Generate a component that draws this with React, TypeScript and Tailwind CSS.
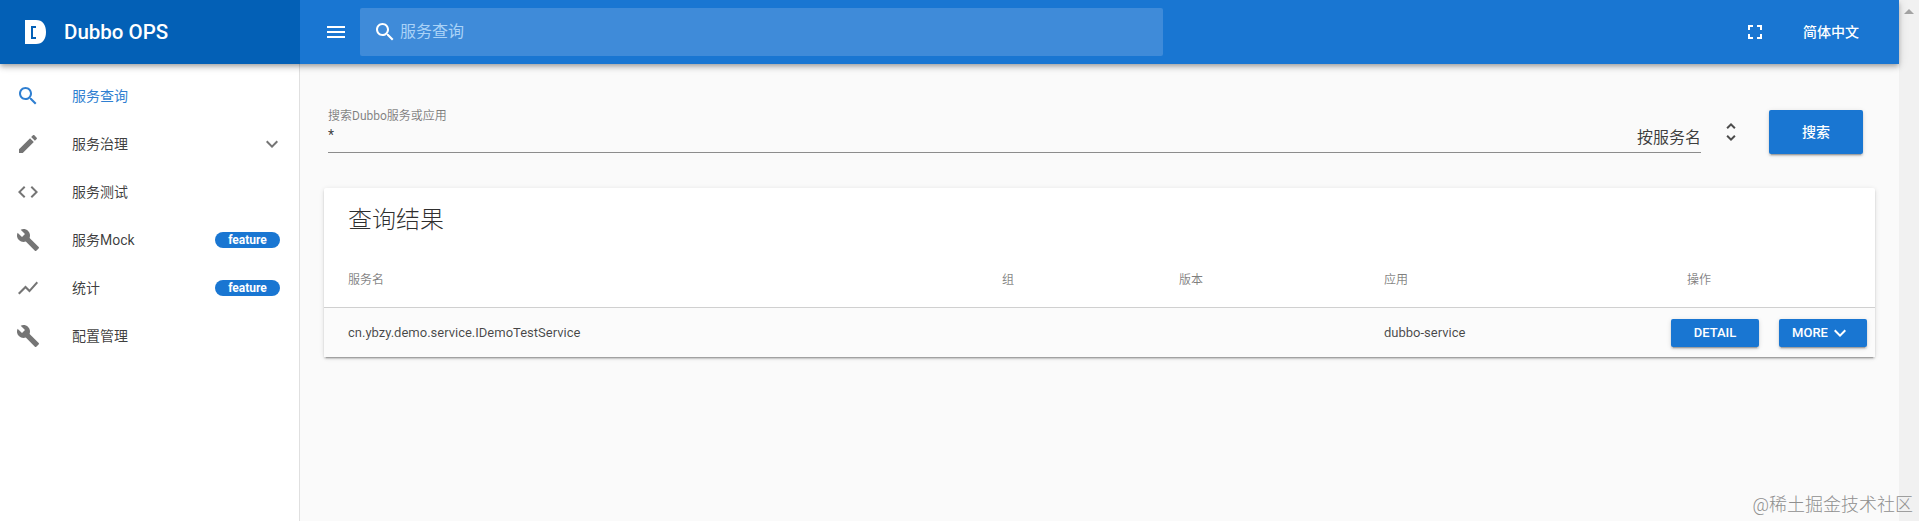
import type { ReactNode } from 'react';

const fontStack = "font-['Roboto','Noto_Sans_CJK_SC',sans-serif]";

function MdIcon({ d, className }: { d: string; className?: string }) {
  return (
    <svg viewBox="0 0 24 24" fill="currentColor" className={className}>
      <path d={d} />
    </svg>
  );
}

const icons = {
  search:
    'M15.5 14h-.79l-.28-.27C15.41 12.59 16 11.11 16 9.5 16 5.91 13.09 3 9.5 3S3 5.91 3 9.5 5.91 16 9.5 16c1.61 0 3.09-.59 4.23-1.57l.27.28v.79l5 4.99L20.49 19l-4.99-5zm-6 0C7.01 14 5 11.99 5 9.5S7.01 5 9.5 5 14 7.01 14 9.5 11.99 14 9.5 14z',
  edit: 'M3 17.25V21h3.75L17.81 9.94l-3.75-3.75L3 17.25zM20.71 7.04c.39-.39.39-1.02 0-1.41l-2.34-2.34c-.39-.39-1.02-.39-1.41 0l-1.83 1.83 3.75 3.75 1.83-1.83z',
  code: 'M9.4 16.6L4.8 12l4.6-4.6L8 6l-6 6 6 6 1.4-1.4zm5.2 0l4.6-4.6-4.6-4.6L16 6l6 6-6 6-1.4-1.4z',
  build:
    'M22.7 19l-9.1-9.1c.9-2.3.4-5-1.5-6.9-2-2-5-2.4-7.4-1.3L9 6 6 9 1.6 4.7C.4 7.1.9 10.1 2.9 12.1c1.9 1.9 4.6 2.4 6.9 1.5l9.1 9.1c.4.4 1 .4 1.4 0l2.3-2.3c.5-.4.5-1.1.1-1.4z',
  chart: 'M3.5 18.49l6-6.01 4 4L22 6.92l-1.41-1.41-7.09 7.97-4-4L2 16.99z',
  menu: 'M3 18h18v-2H3v2zm0-5h18v-2H3v2zm0-7v2h18V6H3z',
  fullscreen: 'M7 14H5v5h5v-2H7v-3zm-2-4h2V7h3V5H5v5zm12 7h-3v2h5v-5h-2v3zM14 5v2h3v3h2V5h-5z',
  unfold: 'M12 5.83L15.17 9l1.41-1.41L12 3 7.41 7.59 8.83 9 12 5.83zm0 12.34L8.83 15l-1.41 1.41L12 21l4.59-4.59L15.17 15 12 18.17z',
  down: 'M7.41 8.59L12 13.17l4.59-4.58L18 10l-6 6-6-6 1.41-1.41z',
};

const navItems = [
  { icon: icons.search, label: '服务查询', active: true },
  { icon: icons.edit, label: '服务治理', arrow: true },
  { icon: icons.code, label: '服务测试' },
  { icon: icons.build, label: '服务Mock', chip: true },
  { icon: icons.chart, label: '统计', chip: true },
  { icon: icons.build, label: '配置管理' },
];

const rowGrid = 'grid grid-cols-[654px_177px_205px_287px_1fr] pl-6';

function BlueButton({ children, className }: { children: ReactNode; className?: string }) {
  return (
    <button
      className={`flex items-center justify-center rounded-[2px] bg-[#1976d2] text-white font-medium shadow-[0_3px_1px_-2px_rgba(0,0,0,.2),0_2px_2px_0_rgba(0,0,0,.14),0_1px_5px_0_rgba(0,0,0,.12)] ${className}`}
    >
      {children}
    </button>
  );
}

export default function App() {
  return (
    <div className={`relative flex h-[521px] overflow-hidden bg-[#fafafa] text-[14px] text-[#000000c4] ${fontStack}`}>
      <div className="flex min-w-0 flex-1 flex-col">
        <header className="z-10 flex h-16 shrink-0 bg-[#1976d2] text-white shadow-[0_2px_4px_-1px_rgba(0,0,0,.2),0_4px_5px_0_rgba(0,0,0,.14),0_1px_10px_0_rgba(0,0,0,.12)]">
          <div className="flex w-[300px] items-center bg-[#0360b6] pl-[25px]">
            <svg viewBox="0 0 21 24" className="h-6 w-[21px]">
              <path
                fillRule="evenodd"
                fill="#ffffff"
                d="M0 0h11c6.500 0 10 4.500 10 12s-3.500 12-10 12H0zM6 6v13h5v-2H8V8h3V6z"
              />
            </svg>
            <span className="ml-[18px] text-[20.5px] font-medium">Dubbo OPS</span>
          </div>
          <button className="ml-6 flex w-6 items-center justify-center self-center">
            <MdIcon d={icons.menu} className="h-6 w-6" />
          </button>
          <div className="ml-3 mt-2 flex h-12 w-[803px] items-center rounded-[2px] bg-[#3f8bd9] pl-[13px]">
            <MdIcon d={icons.search} className="h-6 w-6" />
            <span className="ml-[3px] text-[16px] text-[#a9d2f7]">服务查询</span>
          </div>
          <div className="ml-auto flex items-center pr-10">
            <MdIcon d={icons.fullscreen} className="h-6 w-6" />
            <span className="ml-9 font-medium">简体中文</span>
          </div>
        </header>

        <div className="flex min-h-0 flex-1">
          <aside className="w-[300px] shrink-0 border-r border-[#e0e0e0] bg-white pt-2">
            {navItems.map((item) => (
              <div key={item.label} className={`flex h-12 items-center pl-4 pr-[19px] ${item.active ? 'text-[#2f7fd1]' : ''}`}>
                <MdIcon d={item.icon} className={`h-6 w-6 shrink-0 ${item.active ? '' : 'text-[#757575]'}`} />
                <span className="ml-8">{item.label}</span>
                {item.arrow && <MdIcon d={icons.down} className="ml-auto mr-[-4px] h-6 w-6 text-[#757575]" />}
                {item.chip && (
                  <span className="ml-auto flex h-4 w-[65px] items-center justify-center rounded-full bg-[#1976d2] text-[12px] font-bold text-white">
                    feature
                  </span>
                )}
              </div>
            ))}
          </aside>

          <main className="min-w-0 flex-1 px-6 pt-[44px]">
            <div className="flex items-start pl-1">
              <div className="flex-1">
                <div className="h-[45px] border-b border-[#8c8c8c]">
                  <div className="text-[12px] leading-4 text-[#00000080]">搜索Dubbo服务或应用</div>
                  <div className="flex justify-between text-[16px] leading-5">
                    <span className="pt-[1px] text-[14px]">*</span>
                    <span className="pt-[4px]">按服务名</span>
                  </div>
                </div>
              </div>
              <MdIcon d={icons.unfold} className="ml-[18px] mt-[12px] h-6 w-6 text-[#000000b3]" />
              <BlueButton className="ml-[26px] mt-[2px] h-[44px] w-[94px]">搜索</BlueButton>
              <div className="w-3" />
            </div>

            <section className="mt-[34px] rounded-[2px] bg-white shadow-[0_3px_1px_-2px_rgba(0,0,0,.2),0_2px_2px_0_rgba(0,0,0,.14),0_1px_5px_0_rgba(0,0,0,.12)]">
              <h2 className="h-[70px] pl-6 pt-[16px] text-[24px] font-light leading-8 text-[#000000d0]">查询结果</h2>
              <div className={`${rowGrid} h-[50px] items-center border-b border-[#d0d0d0] pb-[6px] text-[12px] text-[#00000080]`}>
                <span>服务名</span>
                <span>组</span>
                <span>版本</span>
                <span>应用</span>
                <span className="ml-4">操作</span>
              </div>
              <div className={`${rowGrid} h-[49px] items-center bg-[#fbfbfb] text-[13px] text-[#000000b8]`}>
                <span>cn.ybzy.demo.service.IDemoTestService</span>
                <span />
                <span />
                <span>dubbo-service</span>
                <div className="flex gap-5">
                  <BlueButton className="h-7 w-[88px] text-[13px]">DETAIL</BlueButton>
                  <BlueButton className="h-7 w-[88px] text-[13px]">
                    <span className="ml-[-2px]">MORE</span>
                    <MdIcon d={icons.down} className="h-6 w-6" />
                  </BlueButton>
                </div>
              </div>
            </section>
          </main>
        </div>
      </div>

      <div className="w-5 shrink-0 bg-[#f1f1f1] pt-[9px]">
        <svg viewBox="0 0 10 5" className="mx-auto h-[5px] w-[10px]">
          <path d="M5 0l5 5H0z" fill="#a3a3a3" />
        </svg>
      </div>

      <span className="absolute bottom-[6px] right-[6px] text-[18px] font-light leading-5 text-[#8f8f8f]">@稀土掘金技术社区</span>
    </div>
  );
}
